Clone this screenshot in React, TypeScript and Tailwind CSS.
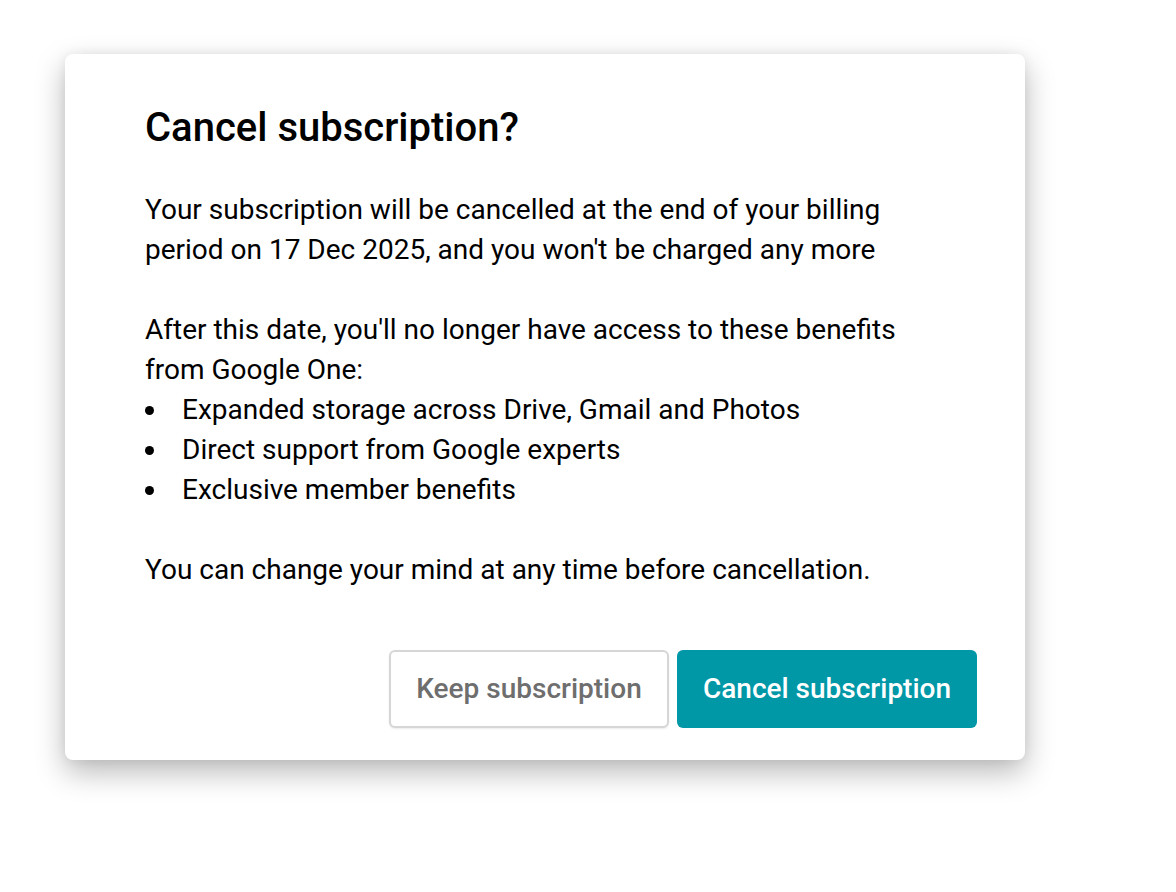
import React from 'react';

const benefits = [
  'Expanded storage across Drive, Gmail and Photos',
  'Direct support from Google experts',
  'Exclusive member benefits',
];

export default function App() {
  return (
    <div className="min-h-[892px] bg-white pl-[65px] pt-[54px] font-['Roboto',sans-serif] text-black">
      <div className="w-[960px] rounded-[8px] bg-white pl-[80px] pr-[48px] pt-[50px] pb-[32px] shadow-[0_12px_30px_rgba(0,0,0,0.28),0_0_12px_rgba(0,0,0,0.06)]">
        <h1 className="text-[40px] font-medium leading-[48px]">Cancel subscription?</h1>

        <div className="mt-[38px] text-[28px] leading-[40px]">
          <p>
            Your subscription will be cancelled at the end of your billing
            <br />
            period on 17 Dec 2025, and you won't be charged any more
          </p>
          <p className="mt-[40px]">
            After this date, you'll no longer have access to these benefits
            <br />
            from Google One:
          </p>
          <ul>
            {benefits.map((b) => (
              <li key={b} className="flex items-center">
                <span className="flex w-[37px] shrink-0 pt-[1px]">
                  <span className="h-[9px] w-[9px] rounded-full bg-black" />
                </span>
                <span>{b}</span>
              </li>
            ))}
          </ul>
          <p className="mt-[40px]">You can change your mind at any time before cancellation.</p>
        </div>

        <div className="mt-[60px] flex justify-end gap-[8px]">
          <button
            type="button"
            className="h-[78px] w-[280px] rounded-[6px] border-2 border-[#d6d6d6] bg-white text-[28px] font-medium text-[#6e6e6e] shadow-[0_1px_2px_rgba(0,0,0,0.08)]"
          >
            Keep subscription
          </button>
          <button
            type="button"
            className="h-[78px] w-[300px] rounded-[6px] bg-[#0097a7] text-[28px] font-medium text-white"
          >
            Cancel subscription
          </button>
        </div>
      </div>
    </div>
  );
}
